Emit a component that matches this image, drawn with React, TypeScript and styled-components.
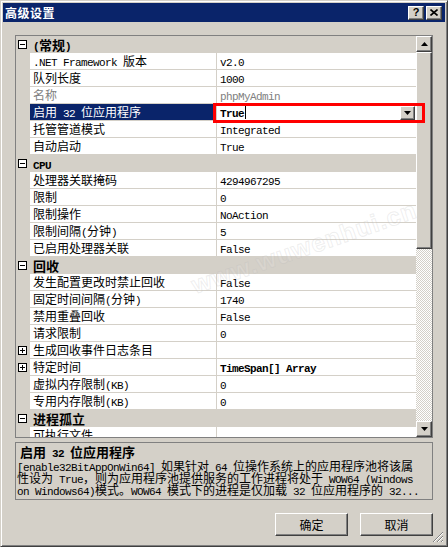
import React from "react";
import styled, { createGlobalStyle } from "styled-components";

const GlobalStyle = createGlobalStyle`
  html, body {
    margin: 0;
    padding: 0;
    background: #d4d0c8;
  }
  body {
    font-family: "Noto Sans CJK SC", "Liberation Sans", sans-serif;
    font-size: 12px;
    color: #000;
  }
`;

const raised = `
  background: #d4d0c8;
  box-sizing: border-box;
  border: 1px solid;
  border-color: #fff #404040 #404040 #fff;
  box-shadow: inset -1px -1px #808080;
`;

const Window = styled.div`
  position: relative;
  width: 448px;
  height: 547px;
  box-sizing: border-box;
  background: #d4d0c8;
  border: 1px solid;
  border-color: #d4d0c8 #404040 #404040 #d4d0c8;
  box-shadow: inset 1px 1px #fff, inset -1px -1px #808080;
  padding: 2px;
  display: flex;
  flex-direction: column;
  overflow: hidden;
`;

const TitleBar = styled.div`
  height: 19px;
  flex: none;
  background: #0a246a;
  display: flex;
  align-items: center;
  padding: 0 3px 0 2px;
  gap: 2px;
`;

const TitleText = styled.div`
  color: #fff;
  font-weight: 700;
  font-size: 12px;
  line-height: 19px;
  letter-spacing: 0.5px;
  margin-right: auto;
`;

const CaptionButton = styled.div`
  ${raised};
  width: 16px;
  height: 14px;
  display: flex;
  align-items: center;
  justify-content: center;
  font-family: "Liberation Sans", sans-serif;
  font-weight: 700;
  font-size: 11px;
  line-height: 1;
`;

const Content = styled.div`
  flex: 1;
  display: flex;
  flex-direction: column;
  padding: 13px 12px 0 12px;
`;

const Grid = styled.div`
  height: 403px;
  flex: none;
  box-sizing: border-box;
  border: 1px solid #808080;
  display: flex;
  background: #fff;
`;

const Rows = styled.div`
  flex: 1;
  overflow-x: visible;
  overflow-y: clip;
  display: flex;
  flex-direction: column;
`;

const Row = styled.div<{ $cat?: boolean }>`
  flex: none;
  height: 17px;
  display: grid;
  grid-template-columns: 14px 187px 1fr;
  background: ${({ $cat }) => ($cat ? "#d4d0c8" : "#fff")};
`;

const Margin = styled.div`
  background: #d4d0c8;
  display: flex;
  align-items: center;
  padding-left: 2px;
`;

const Expander = styled.span<{ $open: boolean }>`
  position: relative;
  width: 9px;
  height: 9px;
  box-sizing: border-box;
  border: 1px solid #000;
  background: #fff;
  flex: none;
  &::before {
    content: "";
    position: absolute;
    left: 1px;
    top: 3px;
    width: 5px;
    height: 1px;
    background: #000;
  }
  &::after {
    content: "";
    display: ${({ $open }) => ($open ? "none" : "block")};
    position: absolute;
    left: 3px;
    top: 1px;
    width: 1px;
    height: 5px;
    background: #000;
  }
`;

const CatLabel = styled.div`
  grid-column: 2 / 4;
  font-weight: 700;
  font-size: 13px;
  line-height: 17px;
  height: 17px;
  padding-left: 3px;
  white-space: nowrap;
`;

const NameCell = styled.div<{ $selected?: boolean; $disabled?: boolean }>`
  box-sizing: border-box;
  height: 17px;
  border-right: 1px solid #d4d0c8;
  border-bottom: 1px solid #d4d0c8;
  padding-left: 3px;
  line-height: 16px;
  white-space: nowrap;
  overflow: hidden;
  background: ${({ $selected }) => ($selected ? "#0a246a" : "#fff")};
  color: ${({ $selected, $disabled }) =>
    $selected ? "#fff" : $disabled ? "#808080" : "#000"};
`;

const ValueCell = styled.div<{ $bold?: boolean; $disabled?: boolean }>`
  position: relative;
  box-sizing: border-box;
  height: 17px;
  border-bottom: 1px solid #d4d0c8;
  padding-left: 3px;
  line-height: 16px;
  white-space: nowrap;
  font-weight: ${({ $bold }) => ($bold ? 700 : 400)};
  color: ${({ $disabled }) => ($disabled ? "#808080" : "#000")};
`;

const Lat = styled.span`
  font-family: "Liberation Mono", monospace;
  font-size: 11px;
  letter-spacing: -0.6px;
`;

const Caret = styled.span`
  display: inline-block;
  width: 1px;
  height: 13px;
  background: #000;
  vertical-align: -2px;
  margin-left: 1px;
`;

const DropButton = styled.div`
  ${raised};
  position: absolute;
  right: 1px;
  top: 2px;
  width: 15px;
  height: 14px;
  display: flex;
  align-items: center;
  justify-content: center;
`;

const Highlight = styled.div`
  position: absolute;
  left: -4px;
  top: -1px;
  width: 212px;
  height: 20px;
  box-sizing: border-box;
  border: 3px solid #ff0000;
  z-index: 3;
  pointer-events: none;
`;

const ScrollBar = styled.div`
  width: 16px;
  flex: none;
  display: flex;
  flex-direction: column;
`;

const ScrollButton = styled.div`
  ${raised};
  height: 16px;
  flex: none;
  display: flex;
  align-items: center;
  justify-content: center;
`;

const Thumb = styled.div`
  ${raised};
  height: 197px;
  flex: none;
`;

const Track = styled.div`
  flex: 1;
  background: repeating-conic-gradient(#d4d0c8 0 25%, #fff 0 50%) 0 0 / 2px 2px;
`;

const Description = styled.div`
  margin-top: 4px;
  height: 58px;
  flex: none;
  box-sizing: border-box;
  border: 1px solid #808080;
  padding: 2px 1px;
  overflow: hidden;
`;

const DescTitle = styled.div`
  font-weight: 700;
  font-size: 13px;
  line-height: 14px;
  height: 15px;
  padding-left: 3px;
  white-space: nowrap;
`;

const DescLine = styled.div`
  line-height: 12px;
  height: 12px;
  white-space: nowrap;
`;

const Buttons = styled.div`
  margin-top: 13px;
  display: flex;
  justify-content: flex-end;
  gap: 12px;
`;

const PushButton = styled.div`
  ${raised};
  width: 73px;
  height: 23px;
  display: flex;
  align-items: center;
  justify-content: center;
  font-size: 12px;
`;

const Grip = styled.svg`
  position: absolute;
  right: 3px;
  bottom: 3px;
`;

const Watermark = styled.div`
  position: absolute;
  left: 185px;
  top: 232px;
  transform: rotate(-19deg);
  font-family: "Liberation Sans", sans-serif;
  font-weight: 700;
  font-size: 25px;
  letter-spacing: 1px;
  color: rgba(255, 255, 255, 0.15);
  -webkit-text-stroke: 1px rgba(180, 180, 180, 0.22);
  pointer-events: none;
  white-space: nowrap;
  z-index: 4;
`;

const Mixed = ({ text }: { text: string }) => (
  <>
    {text.split(/([\x20-\x7e]+)/).map((part, i) =>
      /^[\x20-\x7e]+$/.test(part) ? <Lat key={i}>{part}</Lat> : part
    )}
  </>
);

const Arrow = ({ up }: { up?: boolean }) => (
  <svg width="7" height="4" viewBox="0 0 7 4">
    <path d={up ? "M3.5 0 L7 4 L0 4 Z" : "M0 0 L7 0 L3.5 4 Z"} fill="#000" />
  </svg>
);

type Item =
  | { cat: true; label: string }
  | {
      cat?: false;
      name: string;
      value?: string;
      bold?: boolean;
      disabled?: boolean;
      selected?: boolean;
      plus?: boolean;
    };

const items: Item[] = [
  { cat: true, label: "(常规)" },
  { name: ".NET Framework 版本", value: "v2.0" },
  { name: "队列长度", value: "1000" },
  { name: "名称", value: "phpMyAdmin", disabled: true },
  { name: "启用 32 位应用程序", value: "True", bold: true, selected: true },
  { name: "托管管道模式", value: "Integrated" },
  { name: "自动启动", value: "True" },
  { cat: true, label: "CPU" },
  { name: "处理器关联掩码", value: "4294967295" },
  { name: "限制", value: "0" },
  { name: "限制操作", value: "NoAction" },
  { name: "限制间隔(分钟)", value: "5" },
  { name: "已启用处理器关联", value: "False" },
  { cat: true, label: "回收" },
  { name: "发生配置更改时禁止回收", value: "False" },
  { name: "固定时间间隔(分钟)", value: "1740" },
  { name: "禁用重叠回收", value: "False" },
  { name: "请求限制", value: "0" },
  { name: "生成回收事件日志条目", plus: true },
  { name: "特定时间", value: "TimeSpan[] Array", bold: true, plus: true },
  { name: "虚拟内存限制(KB)", value: "0" },
  { name: "专用内存限制(KB)", value: "0" },
  { cat: true, label: "进程孤立" },
  { name: "可执行文件", value: "" },
];

const App = () => (
  <>
    <GlobalStyle />
    <Window>
      <TitleBar>
        <TitleText>高级设置</TitleText>
        <CaptionButton>?</CaptionButton>
        <CaptionButton>
          <svg width="8" height="7" viewBox="0 0 8 7">
            <path d="M0.5 0.5 L7.5 6.5 M7.5 0.5 L0.5 6.5" stroke="#000" strokeWidth="1.6" />
          </svg>
        </CaptionButton>
      </TitleBar>
      <Content>
        <Grid>
          <Rows>
            {items.map((item, i) =>
              item.cat ? (
                <Row key={i} $cat>
                  <Margin>
                    <Expander $open />
                  </Margin>
                  <CatLabel>
                    <Mixed text={item.label} />
                  </CatLabel>
                </Row>
              ) : (
                <Row key={i}>
                  <Margin>{item.plus && <Expander $open={false} />}</Margin>
                  <NameCell $selected={item.selected} $disabled={item.disabled}>
                    <Mixed text={item.name} />
                  </NameCell>
                  <ValueCell $bold={item.bold} $disabled={item.disabled}>
                    <Lat>{item.value}</Lat>
                    {item.selected && (
                      <>
                        <Caret />
                        <DropButton>
                          <Arrow />
                        </DropButton>
                        <Highlight />
                      </>
                    )}
                  </ValueCell>
                </Row>
              )
            )}
          </Rows>
          <ScrollBar>
            <ScrollButton>
              <Arrow up />
            </ScrollButton>
            <Thumb />
            <Track />
            <ScrollButton>
              <Arrow />
            </ScrollButton>
          </ScrollBar>
        </Grid>
        <Description>
          <DescTitle>
            <Mixed text="启用 32 位应用程序" />
          </DescTitle>
          <DescLine>
            <Mixed text="[enable32BitAppOnWin64] 如果针对 64 位操作系统上的应用程序池将该属" />
          </DescLine>
          <DescLine>
            <Mixed text="性设为 True，则为应用程序池提供服务的工作进程将处于 WOW64 (Windows" />
          </DescLine>
          <DescLine>
            <Mixed text="on Windows64)模式。WOW64 模式下的进程是仅加载 32 位应用程序的 32..." />
          </DescLine>
        </Description>
        <Buttons>
          <PushButton>确定</PushButton>
          <PushButton>取消</PushButton>
        </Buttons>
      </Content>
      <Watermark>www.wuwenhui.cn</Watermark>
      <Grip width="12" height="12" viewBox="0 0 12 12">
        <path d="M11 1 L1 11 M11 5 L5 11 M11 9 L9 11" stroke="#808080" strokeWidth="1" />
        <path d="M11 2 L2 11 M11 6 L6 11 M11 10 L10 11" stroke="#fff" strokeWidth="1" />
      </Grip>
    </Window>
  </>
);

export default App;
